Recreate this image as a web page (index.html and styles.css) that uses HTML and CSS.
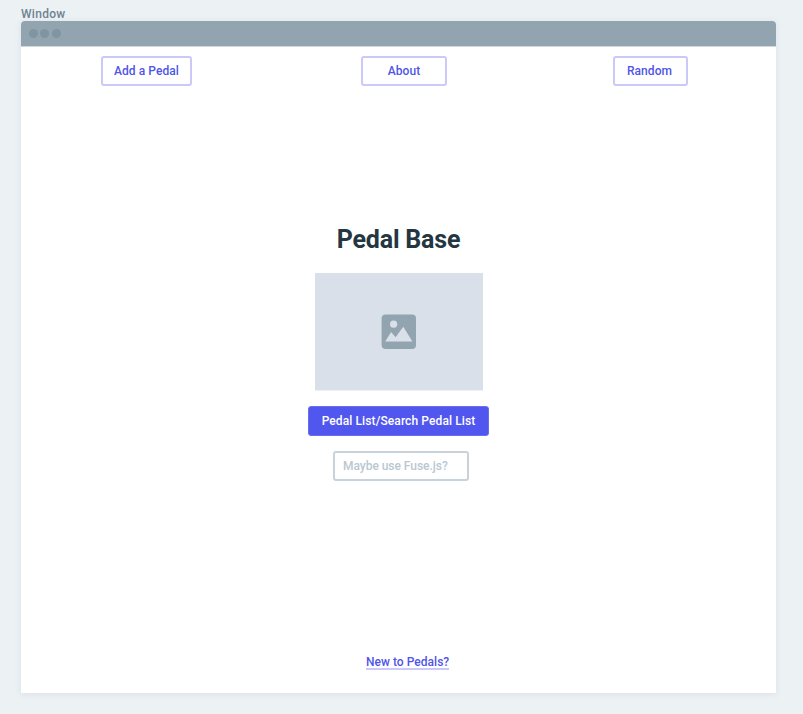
FILE: index.html
```html
<!DOCTYPE html>
<html lang="en">
<head>
<meta charset="utf-8">
<title>Pedal Base</title>
<link rel="stylesheet" href="styles.css">
</head>
<body>
<div class="label"><span>Window</span></div>
<div class="window">
  <div class="titlebar"><i class="dot"></i><i class="dot"></i><i class="dot"></i></div>
  <nav class="nav">
    <button class="btn add"><span>Add a Pedal</span></button>
    <button class="btn about"><span>About</span></button>
    <button class="btn random"><span>Random</span></button>
  </nav>
  <main class="main">
    <h1 class="title"><span>Pedal Base</span></h1>
    <div class="picture">
      <svg class="icon" viewBox="0 0 35 35" width="35" height="35">
        <rect x="0.6" y="0.6" width="34.4" height="34.4" rx="4"/>
        <circle class="cut" cx="12.6" cy="10.2" r="3.6"/>
        <path class="cut" d="M4.2 27.6 10.1 18.1 14.6 23.3 22.3 12.7 31.4 27.6Z"/>
      </svg>
    </div>
    <button class="btn primary"><span>Pedal List/Search Pedal List</span></button>
    <div class="field"><span>Maybe use Fuse.js?</span></div>
  </main>
  <footer class="footer"><a class="link"><span>New to Pedals?</span></a></footer>
</div>
</body>
</html>
```
FILE: styles.css
```css
* { box-sizing: border-box; }
body {
  margin: 0;
  height: 714px;
  padding: 6px 27px 0 21px;
  overflow: hidden;
  background: #ecf1f4;
  font: 500 12px/15px Roboto, "Liberation Sans", sans-serif;
}
.label { height: 15px; line-height: 16px; color: #6f8390; letter-spacing: 0.3px; }
.window {
  width: 755px;
  height: 672px;
  display: flex;
  flex-direction: column;
  background: #fff;
  border-radius: 4px 4px 0 0;
  box-shadow: 0 1px 7px rgba(60, 90, 110, 0.11);
}
.titlebar {
  flex: none;
  height: 26px;
  padding: 0 0 0 8px;
  display: flex;
  align-items: center;
  gap: 2.3px;
  background: #92a4b0;
  border-bottom: 1px solid #cfd7dd;
  border-radius: 4px 4px 0 0;
}
.dot { width: 9px; height: 9px; border-radius: 50%; background: #8194a1; }
.nav { display: flex; padding: 9px 0 0 80px; }
.btn {
  height: 30px;
  padding: 0;
  background: #fff;
  border: 2px solid #cbc9f7;
  border-radius: 3px;
  color: #5055e8;
  font: inherit;
  letter-spacing: 0.07px;
}
.add { width: 91px; }
.about { width: 86px; margin-left: 169px; }
.random { width: 75px; margin-left: 166px; padding-right: 2px; }
.main { display: flex; flex-direction: column; align-items: center; padding-top: 138px; }
.title {
  height: 49px;
  margin: 0;
  color: #243642;
  font-size: 25px;
  font-weight: 700;
  line-height: 32px;
  letter-spacing: -0.18px;
}
.picture {
  width: 168px;
  height: 118px;
  display: flex;
  align-items: flex-start;
  justify-content: center;
  padding-top: 41px;
  background: #d9e0e9;
  border-bottom: 1px solid #ecf0f4;
}
.icon { display: block; fill: #92a4b0; }
.cut { fill: #d9e0e9; }
.primary {
  width: 181px;
  margin-top: 15px;
  background: #5056ee;
  border: 1px solid #696eef;
  color: #fff;
  letter-spacing: 0.1px;
}
.field {
  width: 136px;
  height: 30px;
  margin: 15px 0 0 5px;
  padding-left: 8px;
  border: 2px solid #c8d2da;
  border-radius: 3px;
  color: #b9c7d1;
  line-height: 26px;
  letter-spacing: -0.03px;
}
.footer { margin-top: auto; padding: 0 0 23px 345px; }
.link {
  display: inline-block;
  height: 16px;
  border-bottom: 2px solid #cbc9f7;
  color: #5055e8;
  line-height: 17px;
  letter-spacing: 0.03px;
}
```
